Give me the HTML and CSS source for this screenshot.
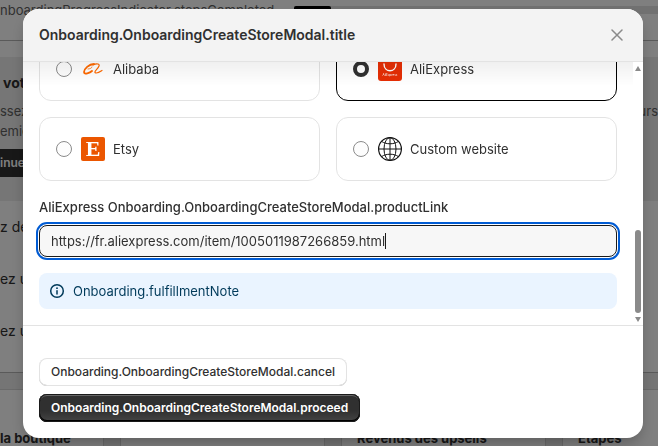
FILE: index.html
```html
<!DOCTYPE html>
<html lang="fr">
<head>
    <meta charset="utf-8">
    <meta name="viewport" content="width=device-width, initial-scale=1.0">
    <title>Onboarding</title>
    <link rel="stylesheet" href="styles.css">
</head>
<body>
    <div class="page">
        <div class="steps">
            <span>nboardingProgressIndicator.stepsCompleted</span>
            <div class="progress"><div class="progress-bar"></div></div>
        </div>
        <div class="hero">
            <h2>vot</h2>
            <p class="hero-text"><span>ssez</span><span>urs</span></p>
            <p class="hero-text">emier</p>
            <button type="button" class="hero-button">inuer</button>
        </div>
        <ul class="tasks">
            <li>z de</li>
            <li>ez un</li>
            <li>ez un</li>
        </ul>
        <div class="stats">
            <h3 class="stat stat-first">la boutique</h3>
            <h3 class="stat"></h3>
            <h3 class="stat">Revenus des upsells</h3>
            <h3 class="stat stat-last">Étapes</h3>
        </div>
    </div>

    <div class="backdrop">
        <form class="modal" role="dialog" aria-labelledby="modalTitle">
            <div class="modal-header">
                <h1 id="modalTitle">Onboarding.OnboardingCreateStoreModal.title</h1>
                <button type="button" class="close-button" aria-label="Close">
                    <svg width="12" height="12" viewBox="0 0 12 12" fill="none" stroke="#8a8a8a" stroke-width="1.5" stroke-linecap="round"><path d="M1 1l10 10M11 1L1 11"/></svg>
                </button>
            </div>

            <div class="modal-body">
                <div class="content">
                    <div class="sources">
                        <label class="source">
                            <input type="radio" name="source" value="alibaba">
                            <svg width="24" height="24" viewBox="0 0 24 24" fill="none" stroke="#ff6a00" stroke-linecap="round" stroke-linejoin="round">
                                <path d="M13 7C8 7 3 12 3 15c0 3 6 1 8-1" stroke-width="1.8"/>
                                <path d="M7 12c2 0 4-1 4-2" stroke-width=".8"/>
                                <path d="M12 8c4-2 7-1 6 1-1 3-5 5-4 6.500 1 1 4 0 7-2" stroke-width="1.2"/>
                            </svg>
                            <span>Alibaba</span>
                        </label>
                        <label class="source">
                            <input type="radio" name="source" value="aliexpress" checked>
                            <svg width="24" height="24" viewBox="0 0 24 24">
                                <rect width="24" height="24" rx="3" fill="#e62e04"/>
                                <path d="M6 7c0 9 12 9 12 0" fill="none" stroke="#fff" stroke-width="1.4" stroke-linecap="round"/>
                                <text x="12" y="19" class="icon-caption">AliExpress</text>
                            </svg>
                            <span>AliExpress</span>
                        </label>
                        <label class="source">
                            <input type="radio" name="source" value="etsy">
                            <svg width="24" height="24" viewBox="0 0 24 24">
                                <rect width="24" height="24" rx="2" fill="#eb5600"/>
                                <text x="12" y="19" class="icon-letter">E</text>
                            </svg>
                            <span>Etsy</span>
                        </label>
                        <label class="source">
                            <input type="radio" name="source" value="custom">
                            <svg width="24" height="24" viewBox="0 0 24 24" fill="none" stroke="#111">
                                <circle cx="12" cy="12" r="11.4" stroke-width="1.2"/>
                                <ellipse cx="12" cy="12" rx="6" ry="11.4"/>
                                <path d="M12 .6v22.8M.6 12h22.8M3.6 4.4c4.5 3.2 12.3 3.2 16.8 0M3.6 19.6c4.5-3.2 12.3-3.2 16.8 0"/>
                            </svg>
                            <span>Custom website</span>
                        </label>
                    </div>

                    <div class="field">
                        <label for="productLink">AliExpress Onboarding.OnboardingCreateStoreModal.productLink</label>
                        <div class="text-box">
                            <input type="text" id="productLink" value="https://fr.aliexpress.com/item/1005011987266859.html" autocomplete="off" spellcheck="false">
                            <span class="caret"></span>
                        </div>
                    </div>

                    <div class="note">
                        <svg width="20" height="20" viewBox="0 0 20 20" fill="none" stroke="#003a5a" stroke-width="1.5" stroke-linecap="round">
                            <circle cx="10" cy="10" r="6.3"/>
                            <path d="M10 9.8v3.2"/>
                            <circle cx="10" cy="7.2" r=".9" fill="#003a5a" stroke="none"/>
                        </svg>
                        <span>Onboarding.fulfillmentNote</span>
                    </div>
                </div>
                <div class="scrollbar">
                    <svg width="6" height="5" viewBox="0 0 6 5" fill="#8a8a8a"><path d="M3 0l3 5H0z"/></svg>
                    <div class="track"><div class="thumb"></div></div>
                    <svg width="6" height="5" viewBox="0 0 6 5" fill="#8a8a8a"><path d="M3 5l3-5H0z"/></svg>
                </div>
            </div>

            <div class="modal-footer">
                <button type="button" class="button">Onboarding.OnboardingCreateStoreModal.cancel</button>
                <button type="submit" class="button button-primary">Onboarding.OnboardingCreateStoreModal.proceed</button>
            </div>
        </form>
    </div>
</body>
</html>
```
FILE: styles.css
```css
* {
    box-sizing: border-box;
}

body {
    margin: 0;
    background-color: #f1f1f1;
    color: #303030;
    font-family: Inter, "Liberation Sans", sans-serif;
    font-size: 13px;
    line-height: 20px;
}

h1, h2, h3, p, ul {
    margin: 0;
    padding: 0;
}

/* page behind the modal */

.page {
    display: flex;
    flex-direction: column;
    height: 100vh;
    background-color: #ebebeb;
    overflow: hidden;
}

.steps {
    display: flex;
    flex: none;
    gap: 20px;
    height: 41px;
    background-color: #fff;
    border-bottom: 1px solid #b5b5b5;
    color: #616161;
}

.progress {
    flex: 1;
    height: 8px;
    margin-top: 6px;
    background-color: #e3e3e3;
}

.progress-bar {
    width: 37px;
    height: 8px;
    border-radius: 2px;
    background-color: #000;
}

.hero {
    flex: none;
    height: 160px;
    padding-top: 16px;
    border-top: 16px solid #fff;
    background-color: #ececec;
}

.hero h2 {
    margin-bottom: 8px;
    padding-left: 3px;
    font-size: 14px;
}

.hero-text {
    display: flex;
    justify-content: space-between;
    color: #616161;
}

.hero-button {
    height: 28px;
    margin-top: 8px;
    padding: 0 12px 0 0;
    border: none;
    background-color: #303030;
    color: #fff;
    font: 600 12px/28px Inter, "Liberation Sans", sans-serif;
}

.tasks {
    flex: none;
    list-style: none;
    padding: 16px 0 31px;
    background-color: #fff;
    border-bottom: 1px solid #b5b5b5;
    font-size: 14px;
}

.tasks li {
    padding-bottom: 32px;
}

.tasks li:last-child {
    padding-bottom: 0;
}

.stats {
    display: flex;
    flex: 1;
    gap: 16px;
    margin-top: 16px;
}

.stat {
    flex: 0 0 205px;
    padding: 38px 15px 0;
    border: 1px solid #d4d4d4;
    border-bottom: none;
    background-color: #fff;
    font-size: 13px;
}

.stat-first {
    flex-basis: 104px;
    padding-left: 0;
    border-left: none;
    white-space: nowrap;
}

.stat-last {
    flex: 1;
    border-right: none;
}

/* modal */

.backdrop {
    position: fixed;
    inset: 0;
    display: flex;
    justify-content: center;
    padding: 9px 15px 8px 23px;
    background-color: rgba(0, 0, 0, 0.5);
}

.modal {
    display: flex;
    flex-direction: column;
    width: 100%;
    max-width: 620px;
    border-radius: 16px;
    background-color: #fff;
    box-shadow: 0 8px 16px -4px rgba(0, 0, 0, 0.3);
    overflow: hidden;
}

.modal-header {
    display: flex;
    align-items: center;
    justify-content: space-between;
    padding: 16px;
    border-bottom: 1px solid #e3e3e3;
    background-color: #f3f3f3;
}

.modal-header h1 {
    font-size: 14px;
    font-weight: 600;
    line-height: 20px;
}

.close-button {
    display: flex;
    align-items: center;
    justify-content: center;
    width: 20px;
    height: 20px;
    padding: 0;
    border: none;
    background: none;
    cursor: pointer;
}

.modal-body {
    position: relative;
    display: flex;
    flex: 1;
    min-height: 0;
    overflow: hidden;
}

/* shadow under the header while the body is scrolled */
.modal-body::before {
    content: "";
    position: absolute;
    top: 0;
    left: 0;
    right: 10px;
    height: 24px;
    background: linear-gradient(rgba(0, 0, 0, 0.06), rgba(0, 0, 0, 0));
    pointer-events: none;
}

.content {
    display: flex;
    flex: 1;
    flex-direction: column;
    justify-content: flex-end;
    gap: 16px;
    padding: 16px;
}

.sources {
    display: grid;
    grid-template-columns: 1fr 1fr;
    gap: 16px;
}

.source {
    display: flex;
    align-items: center;
    gap: 8px;
    height: 64px;
    padding: 0 16px;
    border: 1px solid #e3e3e3;
    border-radius: 12px;
    cursor: pointer;
}

.source:has(input:checked) {
    border-color: #000;
}

.source svg {
    flex: none;
}

.source input {
    appearance: none;
    flex: none;
    width: 16px;
    height: 16px;
    margin: 0 1px 0 0;
    border: 1px solid #8a8a8a;
    border-radius: 50%;
    background-color: #fdfdfd;
}

.source input:checked {
    border: 4px solid #303030;
    background-color: #fff;
}

.icon-caption {
    fill: #fff;
    font-size: 3px;
    text-anchor: middle;
}

.icon-letter {
    fill: #fff;
    font-family: "Liberation Serif", serif;
    font-size: 22px;
    font-weight: 700;
    text-anchor: middle;
}

.field {
    display: flex;
    flex-direction: column;
    gap: 8px;
}

.field label {
    font-weight: 550;
}

.text-box {
    display: flex;
    align-items: center;
    height: 32px;
    padding: 0 11px;
    border: 1px solid #1a1a1a;
    border-radius: 8px;
    outline: 2px solid #005bd3;
    outline-offset: 1px;
    background-color: #f7f7f7;
}

.text-box input {
    field-sizing: content;
    max-width: 100%;
    padding: 0;
    border: none;
    outline: none;
    background: none;
    color: #303030;
    caret-color: transparent;
    font: inherit;
}

.caret {
    width: 1px;
    height: 16px;
    background-color: #1a1a1a;
}

.note {
    display: flex;
    align-items: center;
    gap: 6px;
    padding: 8px;
    border-radius: 8px;
    background-color: #eaf4ff;
    color: #003a5a;
}

.scrollbar {
    display: flex;
    flex-direction: column;
    align-items: center;
    width: 10px;
    padding: 4px 2px 3px;
    background-color: #fff;
}

.track {
    display: flex;
    flex: 1;
    flex-direction: column;
    justify-content: flex-end;
    padding: 4px 0;
}

.thumb {
    width: 6px;
    height: 35%;
    border-radius: 3px;
    background-color: #8a8a8a;
}

.modal-footer {
    display: flex;
    flex-direction: column;
    align-items: flex-start;
    gap: 8px;
    padding: 32px 16px 16px;
    border-top: 1px solid #e3e3e3;
}

.button {
    height: 28px;
    padding: 0 12px;
    border: none;
    border-radius: 8px;
    background-color: #fff;
    box-shadow: inset 0 0 0 1px #e3e3e3, inset 0 -1px 0 #b5b5b5;
    color: #303030;
    font-family: inherit;
    font-size: 12px;
    font-weight: 550;
    line-height: 16px;
    cursor: pointer;
}

.button-primary {
    background: linear-gradient(#303030 60%, #454545);
    box-shadow: inset 0 0 0 1px #1a1a1a, inset 0 2px 0 #666, inset 0 -1px 0 1px #000;
    color: #fff;
    font-weight: 600;
}
```
